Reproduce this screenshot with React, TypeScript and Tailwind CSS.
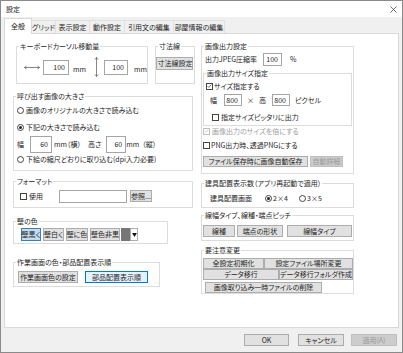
import React from "react";

const Group = ({
  title,
  className = "",
  children,
}: {
  title: string;
  className?: string;
  children?: React.ReactNode;
}) => (
  <fieldset className={`border border-[#dcdcdc] ${className}`}>
    <legend className="ml-[2px] px-[1px] leading-[9px] whitespace-nowrap">{title}</legend>
    {children}
  </fieldset>
);

const Btn = ({
  className = "",
  children,
  disabled,
  state,
}: {
  className?: string;
  children: React.ReactNode;
  disabled?: boolean;
  state?: "on" | "focus";
}) => (
  <div
    className={`flex shrink-0 items-center justify-center border leading-none whitespace-nowrap ${
      disabled
        ? "border-[#bfbfbf] bg-[#cccccc] text-[#9a9a9a]"
        : state === "on"
          ? "border-[#3c7fb1] bg-[#c4dcf0]"
          : state === "focus"
            ? "border-[#0078d7] bg-[#e5f1fb]"
            : "border-[#adadad] bg-[#e1e1e1]"
    } ${className}`}
  >
    {children}
  </div>
);

const Check = ({ checked, disabled }: { checked?: boolean; disabled?: boolean }) => (
  <span
    className={`flex h-[7px] w-[7px] shrink-0 items-center justify-center border bg-white ${
      disabled ? "border-[#c0c0c0]" : "border-[#444444]"
    }`}
  >
    {checked && (
      <svg viewBox="0 0 8 8" className="h-[6px] w-[6px]">
        <path
          d="M1 4.2l2 2 4-4.6"
          fill="none"
          stroke={disabled ? "#bdbdbd" : "#333"}
          strokeWidth="1.1"
        />
      </svg>
    )}
  </span>
);

const Radio = ({ on }: { on?: boolean }) => (
  <span className="flex h-[7px] w-[7px] shrink-0 items-center justify-center rounded-full border border-[#444444] bg-white">
    {on && <span className="h-[3px] w-[3px] rounded-full bg-[#222]" />}
  </span>
);

const Field = ({ className = "", children }: { className?: string; children?: React.ReactNode }) => (
  <div
    className={`flex shrink-0 items-center justify-end border border-[#a5a5a5] bg-white pr-[3px] leading-none ${className}`}
  >
    {children}
  </div>
);

const tabs = ["グリッド", "表示設定", "動作設定", "引用文の編集", "部屋情報の編集"];
const tabW = ["w-[24px]", "w-[34px]", "w-[35px]", "w-[49px]", "w-[51px]"];

export default function App() {
  return (
    <div className="flex h-[353px] w-[403px] flex-col border border-[#8a8a8a] bg-[#f0f0f0] font-['Noto_Sans_CJK_JP','Noto_Sans',sans-serif] text-[7px] text-[#262626] [font-feature-settings:'palt']">
      {/* title bar */}
      <div className="flex h-[16px] shrink-0 items-center justify-between bg-white pl-[5px] pr-[5px]">
        <span className="leading-none">設定</span>
        <svg viewBox="0 0 8 8" className="h-[7px] w-[7px]">
          <path d="M0.5 0.5l7 7M7.5 0.5l-7 7" stroke="#333" strokeWidth="0.8" />
        </svg>
      </div>

      {/* tabs */}
      <div className="flex h-[16px] shrink-0 items-end pl-[3px]">
        <div className="relative z-10 -mb-px flex h-[16px] w-[28px] items-center justify-center border border-b-0 border-[#d9d9d9] bg-white leading-none">
          全般
        </div>
        {tabs.map((t, i) => (
          <div
            key={t}
            className={`flex h-[13px] items-center justify-center border border-l-0 border-b-0 border-[#e0e0e0] leading-none whitespace-nowrap ${tabW[i]}`}
          >
            {t}
          </div>
        ))}
      </div>

      {/* panel */}
      <div className="mx-[3px] flex h-[295px] shrink-0 gap-[6px] border border-[#d9d9d9] bg-white pl-[8px] pt-[8px]">
        {/* left column */}
        <div className="flex w-[182px] flex-col">
          <div className="flex">
            <Group title="キーボードカーソル移動量" className="ml-[3px] w-[124px]">
              <div className="flex h-[32px] items-center pl-[7px]">
                <svg viewBox="0 0 16 5" className="h-[5px] w-[16px]">
                  <path d="M0.5 2.5h15M0.5 2.5l2 -1.5M0.5 2.5l2 1.5M15.5 2.5l-2 -1.5M15.5 2.5l-2 1.5" stroke="#555" strokeWidth="0.7" fill="none" />
                </svg>
                <Field className="ml-[3px] h-[15px] w-[26px]">100</Field>
                <span className="ml-[4px] mt-[5px] leading-none">mm</span>
                <svg viewBox="0 0 5 20" className="ml-[8px] h-[20px] w-[5px]">
                  <path d="M2.5 0.5v19M2.5 0.5l-1.5 2M2.5 0.5l1.5 2M2.5 19.5l-1.5 -2M2.5 19.5l1.5 -2" stroke="#555" strokeWidth="0.7" fill="none" />
                </svg>
                <Field className="ml-[5px] h-[15px] w-[24px]">100</Field>
                <span className="ml-[6px] mt-[5px] leading-none">mm</span>
              </div>
            </Group>
            <Group title="寸法線" className="ml-[7px] w-[48px]">
              <div className="flex h-[32px] justify-center pt-[6px]">
                <Btn className="h-[13px] w-[37px]">寸法線設定</Btn>
              </div>
            </Group>
          </div>

          <Group title="呼び出す画像の大きさ" className="mt-[8px] w-[180px]">
            <div className="flex flex-col pb-[5px] pl-[3px] pt-[3px]">
              <div className="flex h-[12px] items-center gap-[2px] leading-none">
                <Radio />
                <span>画像のオリジナルの大きさで読み込む</span>
              </div>
              <div className="mt-[5px] flex h-[12px] items-center gap-[2px] leading-none">
                <Radio on />
                <span>下記の大きさで読み込む</span>
              </div>
              <div className="mt-[3px] flex h-[17px] items-center leading-none">
                <span>幅</span>
                <Field className="ml-[6px] h-[17px] w-[22px]">60</Field>
                <span className="ml-[2px]">mm（横）</span>
                <span className="ml-[7px]">高さ</span>
                <Field className="ml-[5px] h-[17px] w-[20px]">60</Field>
                <span>mm</span>
                <span className="ml-[3px]">（縦）</span>
              </div>
              <div className="flex h-[12px] items-center gap-[2px] leading-none">
                <Radio />
                <span>下絵の縮尺どおりに取り込む(dpi入力必要)</span>
              </div>
            </div>
          </Group>

          <Group title="フォーマット" className="mt-[6px] w-[180px]">
            <div className="mb-[4px] mt-[3px] flex h-[14px] items-center pl-[6px] leading-none">
              <Check />
              <span className="ml-[2px]">使用</span>
              <Field className="ml-[16px] h-[13px] w-[68px]" />
              <Btn className="ml-[3px] h-[12px] w-[22px]">参照...</Btn>
            </div>
          </Group>

          <Group title="壁の色" className="mt-[9px] w-[155px]">
            <div className="mb-[2px] mt-[2px] flex h-[13px] items-stretch pl-[7px]">
              <Btn state="on" className="w-[20px]">壁黒く</Btn>
              <Btn className="ml-[2px] w-[21px]">壁白く</Btn>
              <Btn className="ml-[2px] w-[22px]">壁に色</Btn>
              <Btn className="ml-[2px] w-[30px]">壁色非黒</Btn>
              <div className="ml-px w-[9px] bg-[#767676]" />
              <div className="flex w-[8px] items-center justify-center border border-[#adadad] bg-white">
                <svg viewBox="0 0 6 5" className="h-[4px] w-[5px]">
                  <path d="M0 0h6L3 5z" fill="#111" />
                </svg>
              </div>
            </div>
          </Group>

          <Group title="作業画面の色・部品配置表示順" className="mt-[14px] w-[147px]">
            <div className="mb-[3px] mt-[4px] flex h-[12px] items-stretch pl-[4px]">
              <Btn className="w-[60px]">作業画面色の設定</Btn>
              <Btn state="focus" className="ml-[7px] w-[63px]">部品配置表示順</Btn>
            </div>
          </Group>
        </div>

        {/* right column */}
        <div className="flex w-[153px] flex-col">
          <Group title="画像出力設定" className="w-[153px]">
            <div className="mt-[1px] flex h-[14px] items-center pl-[3px] leading-none">
              <span className="w-[58px]">出力JPEG圧縮率</span>
              <Field className="h-[13px] w-[19px]">100</Field>
              <span className="ml-[8px]">%</span>
            </div>
            <Group title="画像出力サイズ指定" className="mx-[1px] mt-[3px]">
              <div className="mt-[3px] flex h-[10px] items-center pl-[2px] leading-none">
                <Check checked />
                <span className="ml-[1px]">サイズ指定する</span>
              </div>
              <div className="mt-[3px] flex h-[12px] items-center pl-[6px] leading-none">
                <span>幅</span>
                <Field className="ml-[7px] h-[12px] w-[18px]">800</Field>
                <span className="ml-[5px]">×</span>
                <span className="ml-[5px]">高</span>
                <Field className="ml-[6px] h-[12px] w-[18px]">800</Field>
                <span className="ml-[5px]">ピクセル</span>
              </div>
              <div className="mb-[3px] mt-[6px] flex h-[10px] items-center pl-[8px] leading-none">
                <Check />
                <span className="ml-[2px]">指定サイズピッタリに出力</span>
              </div>
            </Group>
            <div className="flex h-[10px] items-center pl-[1px] leading-none text-[#a0a0a0]">
              <Check checked disabled />
              <span className="ml-[2px]">画像出力のサイズを倍にする</span>
            </div>
            <div className="mt-[4px] flex h-[10px] items-center pl-[1px] leading-none">
              <Check />
              <span className="ml-[1px]">PNG出力時、透過PNGにする</span>
            </div>
            <div className="mb-[6px] mt-[6px] flex h-[11px] items-stretch pl-[1px]">
              <Btn className="w-[105px]">ファイル保存時に画像自動保存</Btn>
              <Btn disabled className="ml-[2px] w-[33px]">自動詳細</Btn>
            </div>
          </Group>

          <Group title="建具配置表示数（アプリ再起動で適用）" className="mt-[5px] w-[153px]">
            <div className="mb-[4px] mt-[5px] flex h-[10px] items-center pl-[8px] leading-none">
              <span className="w-[55px]">建具配置画面</span>
              <Radio on />
              <span className="ml-[1px] w-[26px]">2×4</span>
              <Radio />
              <span className="ml-[1px]">3×5</span>
            </div>
          </Group>

          <Group title="線幅タイプ、線種・端点ピッチ" className="mt-[3px] w-[153px]">
            <div className="mb-[3px] mt-[5px] flex h-[12px] items-stretch pl-[1px]">
              <Btn className="w-[32px]">線種</Btn>
              <Btn className="ml-[2px] w-[46px]">端点の形状</Btn>
              <Btn className="ml-[4px] w-[65px]">線幅タイプ</Btn>
            </div>
          </Group>

          <Group title="要注意変更" className="mt-[5px] w-[153px]">
            <div className="flex flex-col pl-[1px] pt-[3px]">
              <div className="flex h-[11px] items-stretch">
                <Btn className="w-[61px]">全設定初期化</Btn>
                <Btn className="w-[89px]">設定ファイル場所変更</Btn>
              </div>
              <div className="flex h-[11px] items-stretch">
                <Btn className="w-[76px]">データ移行</Btn>
                <Btn className="w-[74px]">データ移行フォルダ作成</Btn>
              </div>
              <div className="mt-[2px] flex h-[11px] items-stretch pl-[2px]">
                <Btn className="w-[117px]">画像取り込み一時ファイルの削除</Btn>
              </div>
            </div>
          </Group>
        </div>
      </div>

      {/* bottom buttons */}
      <div className="flex justify-end pr-[5px] pt-[6px]">
        <Btn className="h-[12px] w-[45px]">OK</Btn>
        <Btn className="ml-[9px] h-[12px] w-[46px]">キャンセル</Btn>
        <Btn disabled className="ml-[7px] h-[12px] w-[46px]">適用(A)</Btn>
      </div>
    </div>
  );
}
